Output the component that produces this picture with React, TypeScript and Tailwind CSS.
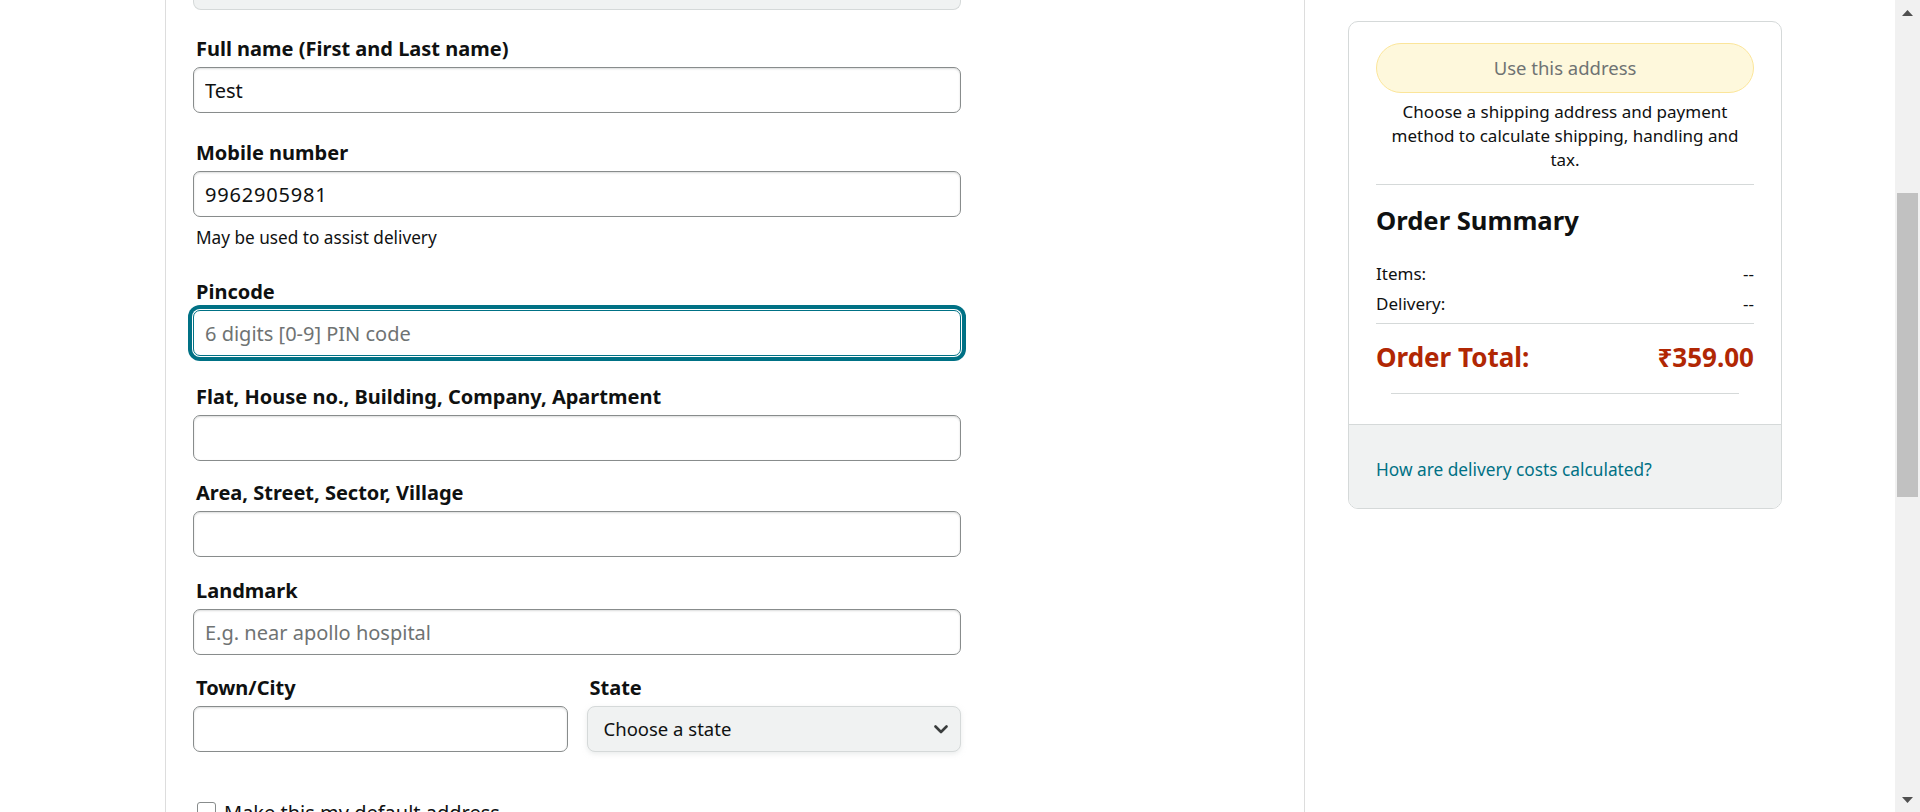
import React from "react";

// Checkout — "add a new address" form, mid-scroll, with the order summary card.

const labelClass =
  "block pl-[3px] text-[20px] font-bold leading-[26px] text-[#0f1111]";
const inputClass =
  "mt-[5px] block h-[46px] w-full rounded-[7px] border border-[#888c8c] bg-white px-[11px] text-[20px] text-[#0f1111] shadow-[inset_0_1px_2px_rgba(15,17,17,0.15)] outline-none placeholder:text-[#6f7373]";
const focusClass =
  "mt-[5px] block h-[46px] w-full rounded-[7px] border border-[#007185] bg-white px-[11px] text-[20px] text-[#0f1111] shadow-[0_0_0_1px_#ffffff,0_0_0_5px_#007185] outline-none placeholder:text-[#6f7373]";

function Field({
  label,
  value,
  placeholder,
  focused,
  className,
  inputExtra,
}: {
  label: string;
  value?: string;
  placeholder?: string;
  focused?: boolean;
  className?: string;
  inputExtra?: string;
}) {
  return (
    <div className={className}>
      <label className={labelClass}>{label}</label>
      <input
        readOnly
        defaultValue={value}
        placeholder={placeholder}
        className={`${focused ? focusClass : inputClass} ${inputExtra ?? ""}`}
      />
    </div>
  );
}

function Arrow({ up }: { up?: boolean }) {
  return (
    <div className="flex h-[25px] w-full items-center justify-center">
      <svg width="11" height="6" viewBox="0 0 11 6">
        <polygon points={up ? "0,6 11,6 5.5,0" : "0,0 11,0 5.5,6"} fill="#505050" />
      </svg>
    </div>
  );
}

export default function App() {
  return (
    <div className="flex h-[812px] w-[1920px] overflow-hidden bg-white font-['Noto_Sans',sans-serif] text-[#0f1111]">
      <div className="w-[165px] shrink-0" />

      <main className="w-[1140px] shrink-0 border-x border-[#dddddd] pl-[27px]">
        <div className="w-[768px]">
          <div className="h-[10px] rounded-b-[8px] border-x border-b border-[#d5d9d9] bg-[#f0f2f2]" />

          <Field className="mt-[26px]" label="Full name (First and Last name)" value="Test" />

          <Field
            className="mt-[27px]"
            label="Mobile number"
            value="9962905981"
            inputExtra="tracking-[0.8px]"
          />
          <p className="mt-[9px] pl-[3px] text-[17.2px] leading-[24px]">May be used to assist delivery</p>

          <Field
            className="mt-[29px]"
            label="Pincode"
            placeholder="6 digits [0-9] PIN code"
            focused
          />

          <Field className="mt-[28px]" label="Flat, House no., Building, Company, Apartment" />
          <Field className="mt-[19px]" label="Area, Street, Sector, Village" />
          <Field className="mt-[21px]" label="Landmark" placeholder="E.g. near apollo hospital" />

          <div className="mt-[20px] grid grid-cols-2 gap-[19px]">
            <Field label="Town/City" />
            <div>
              <label className={labelClass}>State</label>
              <div className="mt-[5px] flex h-[46px] items-center justify-between rounded-[8px] border border-[#d5d9d9] bg-[#f0f2f2] pl-[16px] pr-[12px] shadow-[0_2px_5px_rgba(213,217,217,0.5)]">
                <span className="text-[18.5px]">Choose a state</span>
                <svg width="14" height="9" viewBox="0 0 14 9" fill="none">
                  <path d="M1.5 1.5 L7 7 L12.5 1.5" stroke="#3a3d3d" strokeWidth="2.6" strokeLinecap="round" strokeLinejoin="round" />
                </svg>
              </div>
            </div>
          </div>

          <div className="mt-[50px] flex items-start pl-[4px]">
            <span className="h-[19px] w-[19px] shrink-0 rounded-[3px] border border-[#888c8c] bg-white" />
            <span className="-mt-[1px] ml-[8px] text-[20px] leading-[24px]">Make this my default address</span>
          </div>
        </div>
      </main>

      <aside className="flex-1 pl-[43px] pt-[21px]">
        <div className="w-[434px] overflow-hidden rounded-[10px] border border-[#d5d9d9]">
          <div className="px-[27px] pb-[30px] pt-[21px]">
            <button
              type="button"
              className="flex h-[50px] w-full items-center justify-center rounded-full border border-[#fbe59a] bg-[#fef8dc] text-[18.5px] text-[#6f7373]"
            >
              Use this address
            </button>
            <p className="mt-[7px] px-2 text-center text-[17px] leading-[24px]">
              Choose a shipping address and payment method to calculate shipping, handling and tax.
            </p>
            <div className="mt-[12px] border-t border-[#d5d9d9]" />
            <h2 className="mt-[20px] text-[25.6px] font-bold leading-[32px]">Order Summary</h2>
            <div className="mt-[25px] flex flex-col gap-[6px] text-[17px] leading-[24px]">
              <div className="flex justify-between">
                <span>Items:</span>
                <span>--</span>
              </div>
              <div className="flex justify-between">
                <span>Delivery:</span>
                <span>--</span>
              </div>
            </div>
            <div className="mt-[7px] border-t border-[#d5d9d9]" />
            <div className="mt-[16px] flex justify-between text-[26px] font-bold leading-[34px] text-[#b12704]">
              <span>Order Total:</span>
              <span>₹359.00</span>
            </div>
            <div className="mx-[15px] mt-[19px] border-t border-[#d5d9d9]" />
          </div>
          <div className="border-t border-[#d5d9d9] bg-[#f0f2f2] px-[27px] pb-[26px] pt-[33px]">
            <a href="#" className="text-[17.3px] leading-[24px] text-[#007185]">
              How are delivery costs calculated?
            </a>
          </div>
        </div>
      </aside>

      <div className="flex w-[25px] shrink-0 flex-col items-center bg-[#f1f1f1]">
        <Arrow up />
        <div className="mt-[168px] h-[304px] w-[21px] bg-[#c1c1c1]" />
        <div className="flex-1" />
        <Arrow />
      </div>
    </div>
  );
}
